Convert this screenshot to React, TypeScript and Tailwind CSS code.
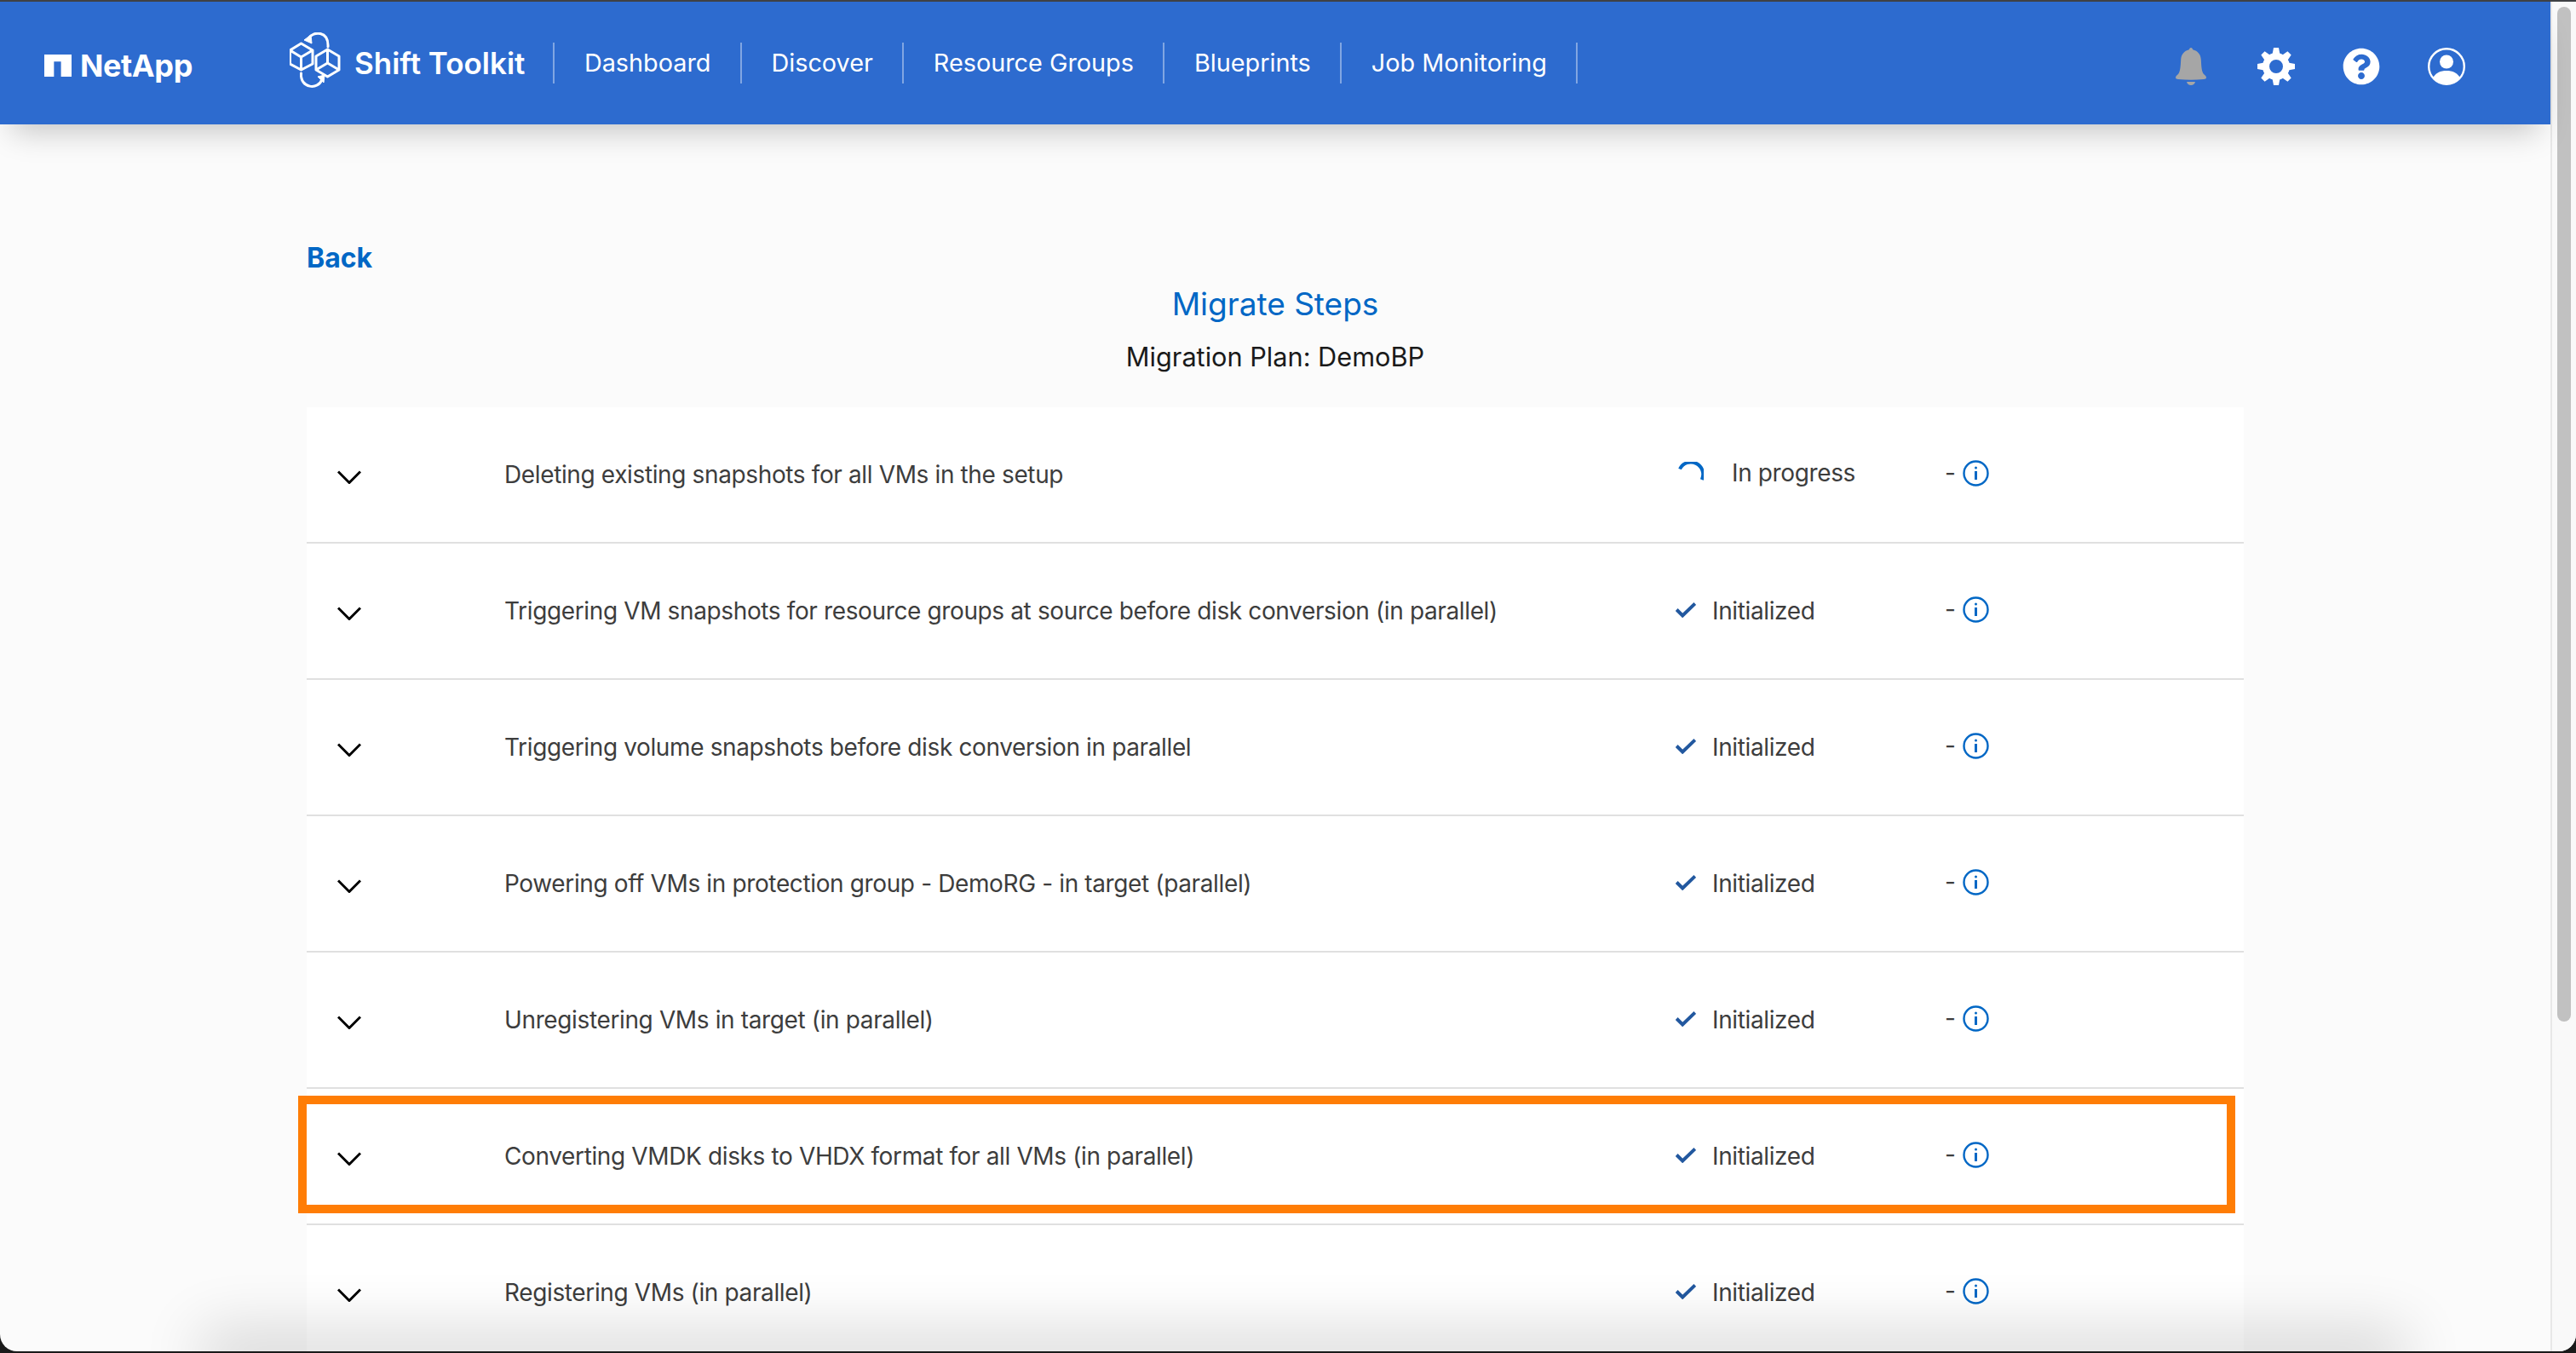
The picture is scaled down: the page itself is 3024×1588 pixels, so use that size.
import { FaQuestionCircle } from 'react-icons/fa';

const NAV_ITEMS = ['Dashboard', 'Discover', 'Resource Groups', 'Blueprints', 'Job Monitoring'];

const GEAR_TEETH = [0, 45, 90, 135, 180, 225, 270, 315];

const STEPS = [
  { label: 'Deleting existing snapshots for all VMs in the setup', status: 'In progress' },
  { label: 'Triggering VM snapshots for resource groups at source before disk conversion (in parallel)', status: 'Initialized' },
  { label: 'Triggering volume snapshots before disk conversion in parallel', status: 'Initialized' },
  { label: 'Powering off VMs in protection group - DemoRG - in target (parallel)', status: 'Initialized' },
  { label: 'Unregistering VMs in target (in parallel)', status: 'Initialized' },
  { label: 'Converting VMDK disks to VHDX format for all VMs (in parallel)', status: 'Initialized', highlighted: true },
  { label: 'Registering VMs (in parallel)', status: 'Initialized' },
];

function NetAppMark() {
  return (
    <svg width="32" height="26" viewBox="0 0 31 25" fill="#fff">
      <path d="M0 0h31v25H19V8h-8v17H0z" />
    </svg>
  );
}

function ShiftLogo() {
  return (
    <svg width="60" height="66" viewBox="0 0 60 66" fill="none" stroke="#fff" strokeWidth="3" strokeLinejoin="round" className="mb-[6px]">
      <path d="M13.500 13L27 21v16l-13.500 7L.5 37V21z" />
      <path d="M.5 21l13 8 13.500-8M13.500 29v15" />
      <path d="M44.500 20L58 28v16l-13.500 8L31 44V28z" />
      <path d="M44.500 20v16M31 44l13.500-8L58 44" />
      <path d="M22 7C28-2 46-2 45 17" strokeLinecap="round" />
      <path d="M17 9l8-6 1 10z" fill="#fff" strokeWidth="1" />
      <path d="M13.500 48C12 66 34 68 38 55" strokeLinecap="round" />
      <path d="M41 50l-8 2 7 7z" fill="#fff" strokeWidth="1" />
    </svg>
  );
}

function BellIcon() {
  return (
    <svg width="36" height="44" viewBox="0 0 36 44" fill="#a6a6a6">
      <path d="M18 0c1.2 0 2 1.2 2.2 2.2C26 3.6 29.5 8 29.800 14c.4 7 .6 14 3.200 17 1.600 1.400 3 2.600 3 4 0 1.600-1.400 1.800-3 2-9.600 1-20.400 1-30 0C1.400 36.800 0 36.600 0 35c0-1.400 1.400-2.600 3-4 2.600-3 2.800-10 3.200-17C6.500 8 10 3.600 15.800 2.200 16 1.200 16.800 0 18 0z" />
      <path d="M13 40h10c-.6 2.400-2.600 4-5 4s-4.400-1.600-5-4z" />
    </svg>
  );
}

function GearIcon() {
  return (
    <svg width="44" height="44" viewBox="0 0 44 44" fill="#fff">
      <circle cx="22" cy="22" r="12" fill="none" stroke="#fff" strokeWidth="8" />
      {GEAR_TEETH.map((angle) => (
        <path key={angle} d="M17.500 8L19 0h6l1.500 8z" transform={`rotate(${angle} 22 22)`} />
      ))}
    </svg>
  );
}

function UserIcon() {
  return (
    <svg width="44" height="44" viewBox="0 0 44 44" fill="#fff">
      <circle cx="22" cy="22" r="20.800" fill="none" stroke="#fff" strokeWidth="2.400" />
      <circle cx="22" cy="16.500" r="8" />
      <path d="M6 35.500C9 29.500 15 27 22 27s13 2.500 16 8.500C34.500 40.500 28.500 43 22 43S9.500 40.500 6 35.500z" />
    </svg>
  );
}

function ChevronIcon() {
  return (
    <svg width="28" height="16" viewBox="0 0 28 16" fill="none" stroke="#000" strokeWidth="3" className="mt-[5px]">
      <path d="M1 1.500l13 13 13-13" />
    </svg>
  );
}

function CheckIcon() {
  return (
    <svg width="24" height="18" viewBox="0 0 24 18" fill="none" stroke="#22589f" strokeWidth="4" className="mb-[2px]">
      <path d="M1.200 8.500l7 7L22.800 1.500" />
    </svg>
  );
}

function Spinner() {
  return (
    <svg width="30" height="24" viewBox="0 0 30 24" fill="none" stroke="#0067c5" strokeWidth="4" className="mb-[6px] ml-[3px]">
      <path d="M2 8.500A13.500 13.500 0 0 1 27.800 21" />
    </svg>
  );
}

function InfoIcon() {
  return (
    <svg width="31" height="31" viewBox="0 0 31 31" fill="none" className="ml-[8px]">
      <circle cx="15.500" cy="15.500" r="14" stroke="#0067c5" strokeWidth="2.400" />
      <rect x="14" y="13" width="3" height="10" fill="#0067c5" />
      <rect x="14" y="7.500" width="3" height="3" rx="1.500" fill="#0067c5" />
    </svg>
  );
}

function StepRow({ label, status, highlighted }: { label: string; status: string; highlighted?: boolean }) {
  const inProgress = status === 'In progress';
  return (
    <div className="relative flex h-40 items-center border-b-2 border-[#e0e0e0] bg-white">
      <div className="flex w-[232px] shrink-0 pl-9">
        <ChevronIcon />
      </div>
      <div className="w-[1375px] shrink-0 text-[28px] tracking-[-0.37px] text-[#3d3d3d]">{label}</div>
      <div className="flex w-[316px] shrink-0 items-center text-[28px] tracking-[-0.37px] text-[#3d3d3d]">
        {inProgress ? <Spinner /> : <CheckIcon />}
        <span className={inProgress ? 'mb-[4px] ml-[33px]' : 'ml-[19px]'}>{status}</span>
      </div>
      <div className="mb-[4px] flex items-center text-[28px] text-[#3d3d3d]">
        <span>-</span>
        <InfoIcon />
      </div>
      {highlighted && (
        <div className="pointer-events-none absolute -left-[10px] right-[10px] top-[8px] h-[138px] border-[10px] border-[#ff7d05]" />
      )}
    </div>
  );
}

export default function App() {
  return (
    <div className="h-[1588px] w-[3024px] overflow-hidden border-t-2 border-[#3f4144] bg-[#1a1a1a] pb-[2px] font-['Inter',sans-serif]">
      <div className="relative flex h-full overflow-hidden rounded-b-[20px] bg-[#fbfbfb]">
        <div className="w-[2994px] shrink-0">
          <header className="relative flex h-[144px] items-center bg-[#2d6bcf] pl-[52px] text-white shadow-[0_22px_34px_-14px_rgba(0,0,0,0.22)]">
            <div className="mt-[5px] flex w-[288px] shrink-0 items-center gap-[10px]">
              <NetAppMark />
              <span className="text-[36px] font-bold tracking-[-0.4px]">NetApp</span>
            </div>
            <div className="flex items-center gap-4">
              <ShiftLogo />
              <span className="text-[35px] font-semibold">Shift Toolkit</span>
            </div>
            <nav className="ml-[33px] flex items-center">
              {NAV_ITEMS.map((item) => (
                <div key={item} className="flex h-12 items-center border-l-2 border-white/40 px-[34.5px] text-[28.8px] last:border-r-2">
                  {item}
                </div>
              ))}
            </nav>
            <div className="mt-[8px] ml-auto flex items-center pr-[72px]">
              <div className="flex w-[100px] justify-center"><BellIcon /></div>
              <div className="flex w-[100px] justify-center"><GearIcon /></div>
              <div className="flex w-[100px] justify-center"><FaQuestionCircle size={44} color="#fff" /></div>
              <div className="flex w-[100px] justify-center"><UserIcon /></div>
            </div>
          </header>

          <main className="mx-[360px] pt-[138px]">
            <a className="block text-[32px] leading-[38px] font-bold text-[#0067c5]">Back</a>
            <h1 className="mt-[12px] text-center text-[37px] leading-[46px] font-normal text-[#0067c5]">Migrate Steps</h1>
            <p className="mt-[21px] text-center text-[30.7px] leading-[36px] text-[#1a1a1a]">Migration Plan: DemoBP</p>
            <div className="mt-[41px]">
              {STEPS.map((step) => (
                <StepRow key={step.label} {...step} />
              ))}
            </div>
          </main>
        </div>

        <aside className="w-[30px] shrink-0 border-l-2 border-[#e8e8e8] bg-[#f9f9f9] pt-[6px] pl-[6px]">
          <div className="h-[1191px] w-4 rounded-full bg-[#c1c1c1]" />
        </aside>

        <div className="pointer-events-none absolute -bottom-[8px] left-[260px] h-[8px] w-[2540px] shadow-[0_0_70px_24px_rgba(0,0,0,0.16)]" />
      </div>
    </div>
  );
}
